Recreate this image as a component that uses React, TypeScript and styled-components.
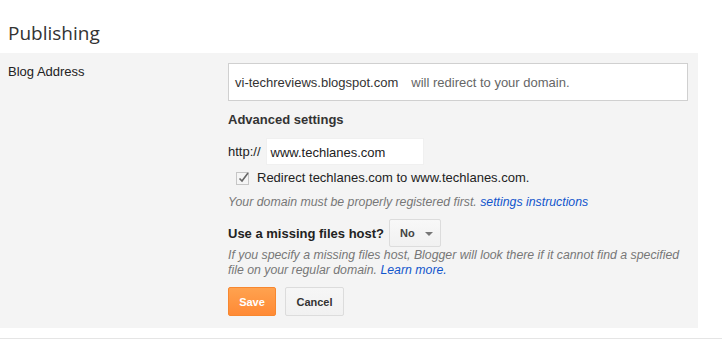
import React from "react";
import styled, { createGlobalStyle } from "styled-components";

const Global = createGlobalStyle`
  html, body { margin: 0; padding: 0; background: #fff; }
  body { font-family: "Liberation Sans", Arial, sans-serif; font-size: 13px; color: #222; }
`;

const Page = styled.div`
  width: 722px;
  display: flex;
  flex-direction: column;
`;

const TitleBar = styled.div`
  height: 53px;
  display: flex;
  align-items: flex-end;
  padding-left: 8px;
  box-sizing: border-box;
`;

const Title = styled.h1`
  margin: 0 0 8px 0;
  font-family: "Open Sans", "Noto Sans", sans-serif;
  font-weight: 400;
  font-size: 19px;
  line-height: 24px;
  color: #333;
`;

const Panel = styled.div`
  width: 698px;
  background: #f4f4f4;
  padding: 10px 0 12px 0;
  box-sizing: border-box;
  display: grid;
  grid-template-columns: 228px 460px;
`;

const Label = styled.div`
  padding-left: 8px;
  padding-top: 1px;
  font-size: 13px;
  line-height: 16px;
  color: #222;
`;

const Content = styled.div`
  display: flex;
  flex-direction: column;
`;

const AddressBox = styled.div`
  height: 38px;
  box-sizing: border-box;
  border: 1px solid #d0d0d0;
  background: #fff;
  padding-left: 6px;
  display: flex;
  align-items: center;
  font-size: 13px;
  color: #333;
`;

const Muted = styled.span`
  color: #666;
  margin-left: 13px;
`;

const Heading = styled.div`
  margin-top: 11px;
  font-weight: 700;
  font-size: 13px;
  line-height: 16px;
  color: #333;
`;

const HttpRow = styled.div`
  margin-top: 10px;
  display: flex;
  align-items: center;
  gap: 5px;
  color: #222;
`;

const TextInput = styled.div`
  width: 158px;
  height: 27px;
  box-sizing: border-box;
  background: #fff;
  border: 1px solid #f0f0f0;
  padding: 2px 0 0 4px;
  display: flex;
  align-items: center;
  font-size: 13px;
  color: #222;
`;

const CheckRow = styled.label`
  margin-top: 5px;
  margin-left: 8px;
  display: flex;
  align-items: center;
  gap: 8px;
  font-size: 13px;
  line-height: 16px;
  color: #222;
`;

const Box = styled.span`
  width: 13px;
  height: 13px;
  box-sizing: border-box;
  border: 1px solid #c6c6c6;
  background: #f5f5f5;
  position: relative;
  display: block;
`;

const Tick = styled.svg`
  position: absolute;
  left: 0px;
  top: -3px;
`;

const Note = styled.div`
  margin-top: 9px;
  font-style: italic;
  font-size: 12.3px;
  line-height: 15px;
  color: #777;
`;

const Link = styled.a`
  color: #15c;
  text-decoration: none;
`;

const HostRow = styled.div`
  margin-top: 9px;
  display: flex;
  align-items: center;
  gap: 5px;
`;

const HostLabel = styled.span`
  font-weight: 700;
  font-size: 13px;
  color: #222;
  padding-top: 1px;
`;

const Select = styled.div`
  width: 52px;
  height: 28px;
  box-sizing: border-box;
  border: 1px solid #dcdcdc;
  background: linear-gradient(#f8f8f8, #f1f1f1);
  border-radius: 2px;
  display: flex;
  align-items: center;
  padding-left: 10px;
  gap: 10px;
  font-weight: 700;
  font-size: 11px;
  color: #444;
`;

const Arrow = styled.span`
  width: 0;
  height: 0;
  border-left: 4px solid transparent;
  border-right: 4px solid transparent;
  border-top: 4px solid #777;
  margin-top: 2px;
`;

const Help = styled(Note)`
  margin-top: 1px;
`;

const Buttons = styled.div`
  margin-top: 9px;
  display: flex;
  gap: 9px;
`;

const Button = styled.button<{ $primary?: boolean }>`
  height: 29px;
  width: ${(p) => (p.$primary ? "48px" : "59px")};
  box-sizing: border-box;
  padding: 0;
  border-radius: 2px;
  font-family: "Liberation Sans", Arial, sans-serif;
  font-weight: 700;
  font-size: 11px;
  border: 1px solid ${(p) => (p.$primary ? "#f7872f" : "#dcdcdc")};
  background: ${(p) =>
    p.$primary ? "linear-gradient(#ffa24f, #ff8a35)" : "linear-gradient(#f6f6f6, #f1f1f1)"};
  color: ${(p) => (p.$primary ? "#fff" : "#333")};
  cursor: pointer;
`;

const Rule = styled.div`
  margin-top: 10px;
  height: 1px;
  background: #e5e5e5;
  width: 722px;
`;

export default function App() {
  return (
    <>
      <Global />
      <Page>
        <TitleBar>
          <Title>Publishing</Title>
        </TitleBar>
        <Panel>
          <Label>Blog Address</Label>
          <Content>
            <AddressBox>
              vi-techreviews.blogspot.com
              <Muted>will redirect to your domain.</Muted>
            </AddressBox>
            <Heading>Advanced settings</Heading>
            <HttpRow>
              <span>http://</span>
              <TextInput>www.techlanes.com</TextInput>
            </HttpRow>
            <CheckRow>
              <Box>
                <Tick width="13" height="14" viewBox="0 0 13 14">
                  <path d="M2.5 8.5 L5 11 L11 3" fill="none" stroke="#666" strokeWidth="1.6" />
                </Tick>
              </Box>
              Redirect techlanes.com to www.techlanes.com.
            </CheckRow>
            <Note>
              Your domain must be properly registered first. <Link href="#">settings instructions</Link>
            </Note>
            <HostRow>
              <HostLabel>Use a missing files host?</HostLabel>
              <Select>
                No
                <Arrow />
              </Select>
            </HostRow>
            <Help>
              If you specify a missing files host, Blogger will look there if it cannot find a specified
              file on your regular domain. <Link href="#">Learn more.</Link>
            </Help>
            <Buttons>
              <Button $primary>Save</Button>
              <Button>Cancel</Button>
            </Buttons>
          </Content>
        </Panel>
        <Rule />
      </Page>
    </>
  );
}
